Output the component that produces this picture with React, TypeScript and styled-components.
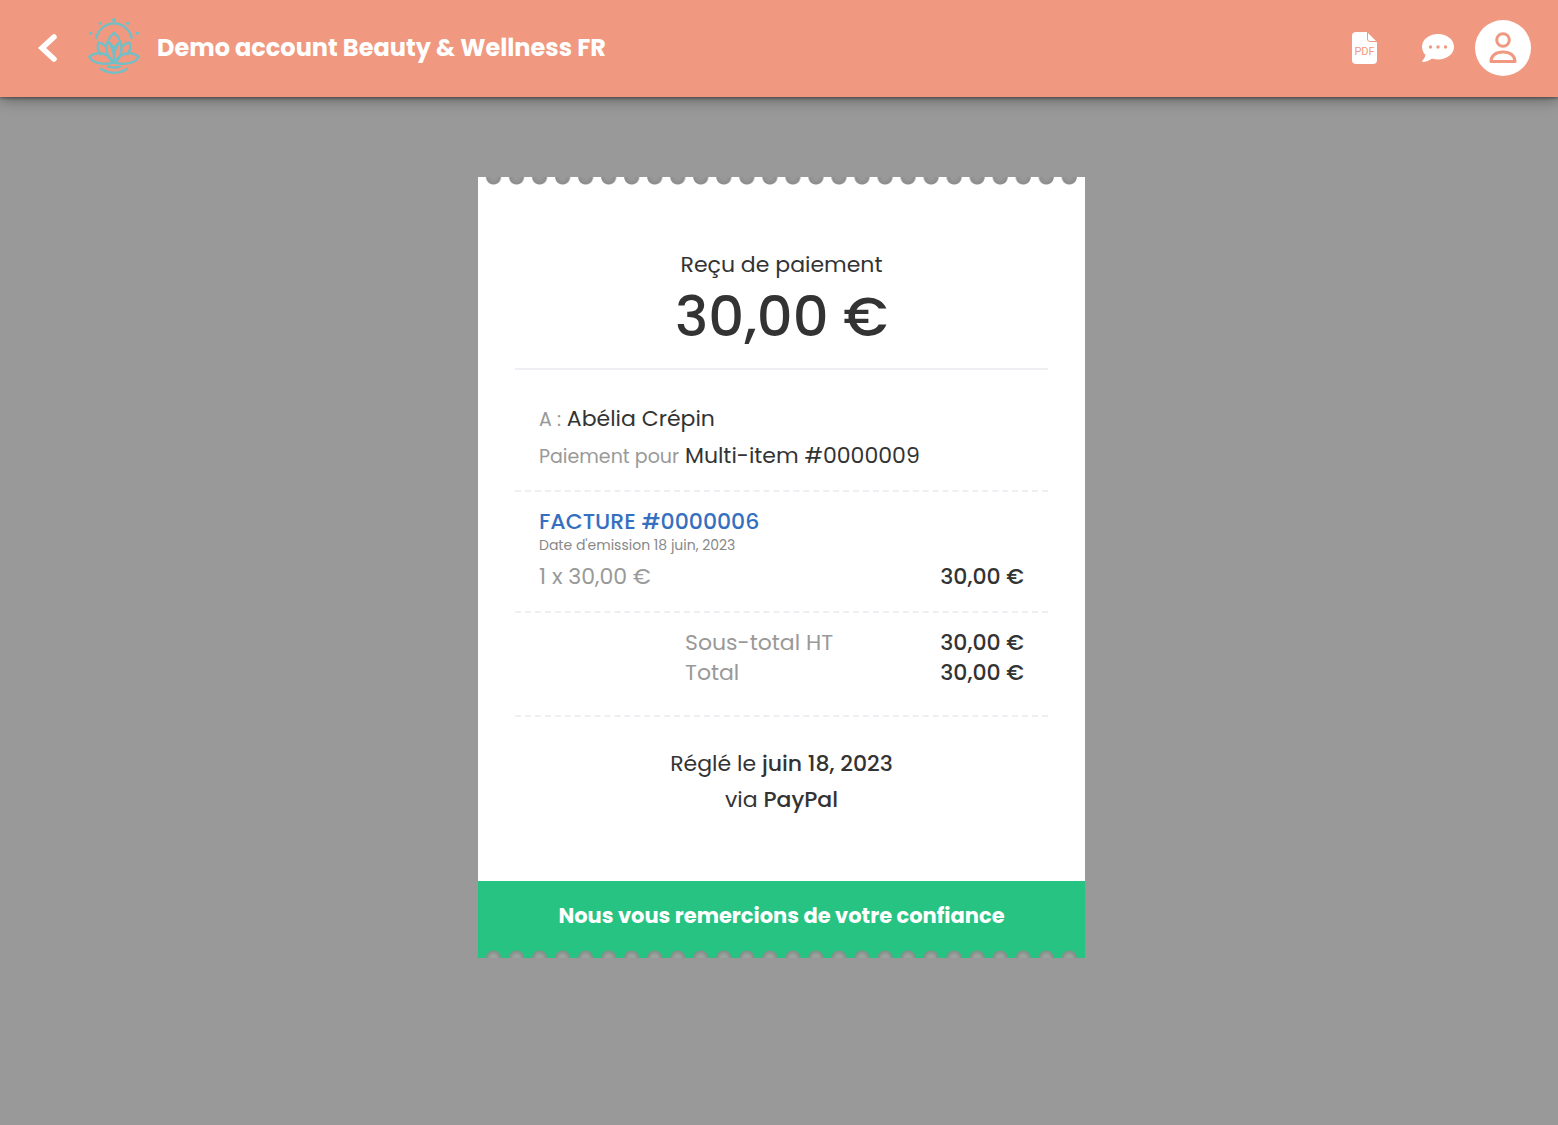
import React from 'react';
import styled, { createGlobalStyle } from 'styled-components';

const coral = '#f09980';
const teal = '#71bfc7';

const GlobalStyle = createGlobalStyle`
  *, *::before, *::after { box-sizing: border-box; }
  body {
    margin: 0;
    background: #999;
    color: #333;
    font-family: Poppins, Inter, "Liberation Sans", sans-serif;
    font-size: 22px;
    line-height: 30px;
  }
  button { font: inherit; cursor: pointer; }
`;

const Header = styled.header`
  display: flex;
  align-items: center;
  justify-content: space-between;
  height: 97px;
  padding: 0 27px 2px 32px;
  background: ${coral};
  box-shadow: 0 2px 14px rgba(0, 0, 0, 0.4), 0 1px 3px rgba(0, 0, 0, 0.4);
`;

const Brand = styled.div`
  display: flex;
  align-items: center;
`;

const BrandName = styled.h1`
  margin: 0 0 0 17px;
  color: #fff;
  font-size: 24px;
  font-weight: 700;
`;

const IconButton = styled.button<{ $gap?: number }>`
  display: flex;
  align-items: center;
  justify-content: center;
  width: 32px;
  height: 40px;
  margin: 0 ${p => p.$gap ?? 0}px 0 0;
  padding: 0;
  border: 0;
  background: none;
  color: #fff;
`;

const AvatarButton = styled(IconButton)`
  width: 56px;
  height: 56px;
  border-radius: 50%;
  background: #fff;
  color: ${coral};
`;

const Actions = styled.nav`
  display: flex;
  align-items: center;
`;

const Main = styled.main`
  display: flex;
  justify-content: center;
  padding: 80px 16px;
`;

const Receipt = styled.article`
  width: 100%;
  max-width: 607px;
  margin-left: 5px;
  background: #fff;
`;

const Perforation = styled.div<{ $side: 'top' | 'bottom' }>`
  height: 8px;
  margin: 0 4px;
  background-image: ${p =>
    p.$side === 'top'
      ? 'radial-gradient(circle at 50% 0, #999 2px, #8c8c8c 7px, transparent 8px)'
      : 'radial-gradient(circle at 50% 100%, #9aa39e 3px, #858d89 7px, transparent 8px)'};
  background-size: 23px 8px;
  background-repeat: round no-repeat;
`;

const Body = styled.div`
  padding: 64px 37px 63px;
`;

const Section = styled.section<{ $line?: 'solid' | 'dashed'; $pad: string }>`
  padding: ${p => p.$pad};
  border-bottom: ${p => (p.$line ? `2px ${p.$line} #eeeff3` : '0')};
`;

const Centered = styled(Section)`
  text-align: center;
`;

const Title = styled.h2`
  margin: 0;
  font-size: 22px;
  font-weight: 400;
  line-height: 32px;
`;

const Amount = styled.p`
  margin: 0;
  font-size: 56px;
  font-weight: 500;
  line-height: 72px;
`;

const Line = styled.p`
  margin: 0;
  line-height: 36px;
`;

const Label = styled.span`
  color: #999;
  font-size: 19px;
`;

const Medium = styled.span`
  font-weight: 500;
`;

const InvoiceLink = styled.a`
  color: #3570c0;
  font-weight: 500;
  text-decoration: none;
`;

const Issued = styled.p`
  margin: 0;
  color: #888;
  font-size: 14px;
  line-height: 16px;
`;

const Row = styled.div<{ $inset?: boolean; $top?: number }>`
  display: flex;
  justify-content: space-between;
  margin-top: ${p => p.$top ?? 0}px;
  padding-left: ${p => (p.$inset ? 146 : 0)}px;
`;

const Muted = styled.span`
  color: #999;
`;

const Thanks = styled.footer`
  background: #27c383;
  color: #fff;
  text-align: center;
  font-size: 21px;
  font-weight: 700;
  line-height: 69px;
`;

const BackIcon = () => (
  <svg width="32" height="32" viewBox="0 0 32 32" fill="none" stroke="currentColor" strokeWidth="5.500" aria-hidden="true">
    <path d="M22 5 10 16 22 27" strokeLinecap="round" />
  </svg>
);

const LotusHalf = () => (
  <>
    <path d="M65 76c-8 22-3 50 18 64 4-26-2-48-18-64z" />
    <path d="M57 90c-5-5-12-9-19-11-5 12-2 26 6 36" />
    <path d="M82 140c-8-18-26-30-48-28-12 1-18 5-24 10 10 20 44 26 72 18z" />
  </>
);

const Lotus = () => (
  <svg width="52" height="60" viewBox="0 0 156 180" fill="none" stroke={teal} strokeWidth="7" strokeLinecap="round" strokeLinejoin="round" aria-hidden="true">
    <g transform="translate(-6 -6)">
      <g fill={teal} stroke="none">
        <circle cx="84" cy="12" r="6" />
        <circle cx="43" cy="22" r="5" />
        <circle cx="125" cy="22" r="5" />
        <circle cx="14" cy="52" r="5" />
        <circle cx="154" cy="52" r="5" />
      </g>
      <path d="M31 66a54 54 0 0 1 106 0" />
      <path d="M69 70c2-9 9-14 15-19 6 5 13 10 15 19M72 82l12 15 12-15" />
      <LotusHalf />
      <g transform="translate(168 0) scale(-1 1)"><LotusHalf /></g>
      <path d="M66 152q18 5 36 0M45 159q39 23 78 0" />
    </g>
  </svg>
);

const PdfIcon = () => (
  <svg width="25" height="32" viewBox="0 0 25 32" aria-hidden="true">
    <path d="M4 0h11l10 10v18a4 4 0 0 1-4 4H4a4 4 0 0 1-4-4V4a4 4 0 0 1 4-4z" fill="currentColor" />
    <path d="M15.500 0v7a2.500 2.500 0 0 0 2.500 2.500h7" fill="none" stroke={coral} />
    <text x="12.500" y="23" fill={coral} fontFamily="Roboto, sans-serif" fontSize="11" fontWeight="400" textAnchor="middle">PDF</text>
  </svg>
);

const ChatIcon = () => (
  <svg width="32" height="28" viewBox="0 0 32 28" aria-hidden="true">
    <path d="M16 0c9 0 16 5.500 16 12.800S25 25.500 16 25.500c-2 0-4-.3-6-1C7 26.500 4 28 1 28c-1 0-1-1-.5-1.500C2 25 3 23 3.500 21 1.300 18.700 0 16 0 12.800 0 5.500 7 0 16 0z" fill="currentColor" />
    <g fill={coral}>
      <circle cx="8.500" cy="13" r="1.700" />
      <circle cx="16" cy="13" r="1.700" />
      <circle cx="23.500" cy="13" r="1.700" />
    </g>
  </svg>
);

const UserIcon = () => (
  <svg width="28" height="32" viewBox="0 0 28 32" fill="none" stroke="currentColor" strokeWidth="3" aria-hidden="true">
    <circle cx="14" cy="8" r="6.300" />
    <path d="M2 29.500c0-6 5-9.500 12-9.500s12 3.500 12 9.500z" strokeLinejoin="round" />
  </svg>
);

export default function App() {
  return (
    <>
      <GlobalStyle />
      <Header>
        <Brand>
          <IconButton type="button" aria-label="Retour" $gap={24}><BackIcon /></IconButton>
          <Lotus />
          <BrandName>Demo account Beauty &amp; Wellness FR</BrandName>
        </Brand>
        <Actions>
          <IconButton type="button" aria-label="Télécharger" $gap={42}><PdfIcon /></IconButton>
          <IconButton type="button" aria-label="Messages" $gap={21}><ChatIcon /></IconButton>
          <AvatarButton type="button" aria-label="Compte"><UserIcon /></AvatarButton>
        </Actions>
      </Header>
      <Main>
        <Receipt>
          <Perforation $side="top" />
          <Body>
            <Centered $line="solid" $pad="0 0 15px">
              <Title>Reçu de paiement</Title>
              <Amount>30,00 €</Amount>
            </Centered>
            <Section $line="dashed" $pad="31px 24px 15px">
              <Line><Label>A :</Label> Abélia Crépin</Line>
              <Line><Label>Paiement pour</Label> Multi-item #0000009</Line>
            </Section>
            <Section $line="dashed" $pad="15px 24px 19px">
              <InvoiceLink href="#facture">FACTURE #0000006</InvoiceLink>
              <Issued>Date d'emission 18 juin, 2023</Issued>
              <Row $top={9}><Muted>1 x 30,00 €</Muted><Medium>30,00 €</Medium></Row>
            </Section>
            <Section $line="dashed" $pad="15px 24px 27px">
              <Row $inset><Muted>Sous-total HT</Muted><Medium>30,00 €</Medium></Row>
              <Row $inset><Muted>Total</Muted><Medium>30,00 €</Medium></Row>
            </Section>
            <Centered $pad="29px 0 0">
              <Line>Réglé le <Medium>juin 18, 2023</Medium></Line>
              <Line>via <Medium>PayPal</Medium></Line>
            </Centered>
          </Body>
          <Thanks>
            Nous vous remercions de votre confiance
            <Perforation $side="bottom" />
          </Thanks>
        </Receipt>
      </Main>
    </>
  );
}
